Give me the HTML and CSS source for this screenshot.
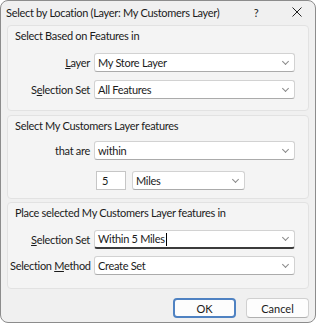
FILE: index.html
```html
<!DOCTYPE html>
<html>
<head>
<meta charset="utf-8">
<link rel="stylesheet" href="styles.css">
</head>
<body>
<div class="window">
  <div class="titlebar">
    <span class="title">Select by Location (Layer: My Customers Layer)</span>
    <span class="help">?</span>
    <span class="close"><svg width="10" height="10" viewBox="0 0 10 10"><path d="M0.5 0.5L9.5 9.5M9.5 0.5L0.5 9.5" stroke="#222" stroke-width="1"/></svg></span>
  </div>

  <div class="group g1">
    <div class="glabel">Select Based on Features in</div>
    <div class="form">
      <label><u>L</u>ayer</label>
      <div class="combo"><span>My Store Layer</span><i class="chev"></i></div>
      <label>S<u>e</u>lection Set</label>
      <div class="combo"><span>All Features</span><i class="chev"></i></div>
    </div>
  </div>

  <div class="group g2">
    <div class="glabel">Select My Customers Layer features</div>
    <div class="form f2">
      <label>that are</label>
      <div class="combo"><span>within</span><i class="chev"></i></div>
      <span></span>
      <div class="distrow">
        <div class="input"><span>5</span></div>
        <div class="combo miles"><span>Miles</span><i class="chev"></i></div>
      </div>
    </div>
  </div>

  <div class="group g3">
    <div class="glabel">Place selected My Customers Layer features in</div>
    <div class="form f3">
      <label><u>S</u>election Set</label>
      <div class="combo focus"><span>Within 5 Miles<b class="caret"></b></span><i class="chev"></i></div>
      <label>Selection <u>M</u>ethod</label>
      <div class="combo"><span>Create Set</span><i class="chev"></i></div>
    </div>
  </div>

  <div class="buttons">
    <button class="btn default">OK</button>
    <button class="btn">Cancel</button>
  </div>
</div>
</body>
</html>
```

FILE: styles.css
```css
* { box-sizing: border-box; }
html, body { margin: 0; padding: 0; background: #ffffff; }
body { font-family: Lato, "Noto Sans", sans-serif; font-size: 11px; letter-spacing: -0.3px; color: #1b1b1b; }

.window {
  width: 316px;
  height: 323px;
  border: 1px solid #8c8c8c;
  border-radius: 8px;
  background: #f0f0f0;
  overflow: hidden;
  display: flex;
  flex-direction: column;
}

.titlebar {
  height: 22px;
  display: flex;
  align-items: center;
  padding-left: 5px;
  flex: none;
}
.title { flex: 1; white-space: nowrap; }
.help { width: 10px; text-align: center; margin-right: 31px; }
.close { width: 10px; margin-right: 13px; display: flex; align-items: center; }

.group {
  margin: 0 6px;
  border: 1px solid #e2e2e2;
  border-radius: 4px;
  background: #f4f4f4;
  padding: 2px 12px 0 2px;
  flex: none;
}
.g1 { height: 86px; margin-top: 2px; }
.g2 { height: 84px; margin-top: 4px; }
.g3 { height: 87px; margin-top: 3px; }

.glabel { line-height: 15px; height: 15px; padding-left: 5px; }

.form {
  display: grid;
  grid-template-columns: 80px 201px;
  column-gap: 4px;
  row-gap: 8px;
  align-items: center;
  margin-top: 10px;
}
.f2 { margin-top: 8px; row-gap: 11px; }
.f3 { row-gap: 7px; }
.form label { text-align: right; white-space: nowrap; }

.combo {
  height: 19px;
  background: #fff;
  border: 1px solid #d2d2d2;
  border-bottom-color: #ababab;
  border-radius: 3px;
  display: flex;
  align-items: center;
  padding-left: 3px;
}
.combo span { flex: 1; white-space: nowrap; }
.chev {
  width: 5px; height: 5px;
  border-right: 1px solid #8a8a8a;
  border-bottom: 1px solid #8a8a8a;
  transform: rotate(45deg);
  margin-right: 6px;
  margin-top: -3px;
}
.combo.focus { border-bottom: 2px solid #3b3b3b; }
.caret { display: inline-block; width: 1px; height: 13px; background: #000; vertical-align: -3px; margin-left: 1px; }

.distrow { display: flex; gap: 6px; padding-left: 2px; }
.input {
  width: 30px; height: 19px;
  background: #fff;
  border: 1px solid #c6c6c6;
  padding-left: 5px;
  display: flex; align-items: center;
}
.miles { width: 113px; }

.buttons {
  display: flex;
  justify-content: flex-end;
  gap: 10px;
  padding: 9px 6px 0 0;
}
.btn {
  font: inherit;
  width: 63px;
  height: 20px;
  background: #fdfdfd;
  border: 1px solid #d0d0d0;
  border-bottom-color: #b0b0b0;
  border-radius: 4px;
  color: #1b1b1b;
  padding: 0;
}
.btn.default { border: 2px solid #4f82c2; }
```
